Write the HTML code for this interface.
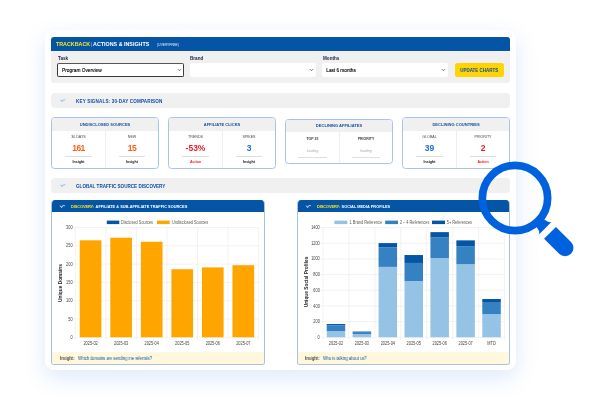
<!DOCTYPE html>
<html><head><meta charset="utf-8">
<style>
*{margin:0;padding:0;box-sizing:border-box}
html,body{width:600px;height:400px;overflow:hidden;background:#fff;font-family:"Liberation Sans",sans-serif}
.a{position:absolute;will-change:transform}
.outer{left:45px;top:30px;width:471px;height:339.5px;border-radius:9px;background:#fff;box-shadow:0 7px 22px rgba(45,120,232,.17)}
.hdr{left:51px;top:37px;width:459px;height:14px;background:#0455a5;border-radius:3px 3px 0 0}
.filt{left:51px;top:51px;width:459px;height:32px;background:#f0f0f0;border-radius:0 0 3px 3px}
.lbl{font-size:4.6px;font-weight:bold;color:#1b1f4a;line-height:5px}
.sel{top:63px;height:13.5px;background:#fff;border-radius:2px;font-size:4.5px;color:#000;-webkit-text-stroke:0.12px #000;line-height:14.5px;padding-left:4.5px}
.chev{position:absolute;right:2.5px;top:4.4px;width:2.3px;height:2.3px;border-right:0.55px solid #555;border-bottom:0.55px solid #555;transform:rotate(45deg)}
.bar{height:14.5px;background:#f0f0f0;border-radius:4px}
.bartxt{font-size:4.6px;font-weight:bold;color:#0f4ca6;line-height:5px}
.card{border:1px solid #a9c3e6;border-radius:3.5px;background:#fff;overflow:hidden}
.ch{height:13px;background:#f0f0f0;text-align:center;font-size:4.05px;font-weight:bold;color:#1a4fa0;line-height:13px}
.col{position:absolute;top:13px;bottom:0;width:50%;text-align:center}
.col.r{left:50%;border-left:1px solid #eee}
.col.l{left:0}
.k{position:absolute;left:0;right:0;top:4px;font-size:3.6px;color:#444;line-height:4px}
.v{position:absolute;left:0;right:0;top:12.5px;font-size:8.5px;font-weight:bold;line-height:9px}
.ln{position:absolute;left:13px;right:13px;top:25px;height:0.8px;background:#dedede}
.ins{position:absolute;left:0;right:0;top:29px;font-size:3.6px;font-weight:bold;color:#111;line-height:4px}
.panel{border:1px solid #a8c1e3;border-top:none;border-radius:4px 4px 3px 3px;background:#fff;overflow:hidden}
.ph{position:absolute;left:0;top:0;right:0;height:12px;background:#0455a5}
.phtxt{font-size:3.9px;font-weight:bold;color:#fff;line-height:5px;white-space:nowrap}
.yl{font-size:3.8px;color:#333;line-height:4px;text-align:right;width:20px}
.xl{font-size:3.8px;color:#333;line-height:4px;text-align:center;width:30px}
.ico{width:5px;height:3px}
.insight{position:absolute;left:0;right:0;bottom:0;height:12.5px;background:#fff8dc}
.instxt{font-size:4.45px;line-height:5px;white-space:nowrap;transform:scaleX(0.9);transform-origin:0 0}
</style></head><body>
<div class="a outer"></div>
<div class="a hdr"></div>
<div class="a" style="left:55.5px;top:40.6px;font-size:5.35px;font-weight:bold;line-height:6px;white-space:nowrap;color:#fff"><span style="color:#ffe61a">TRACKBACK</span><span style="color:#b9c4a0;font-weight:normal;margin-left:0.3px">|</span> ACTIONS &amp; INSIGHTS</div>
<div class="a" style="left:157.3px;top:42.6px;font-size:3.25px;line-height:4px;color:#eef3fb;white-space:nowrap;letter-spacing:-0.05px">(1/VERYFREE)</div>

<div class="a filt"></div>
<div class="a lbl" style="left:58px;top:55.5px">Task</div>
<div class="a lbl" style="left:190px;top:55.5px">Brand</div>
<div class="a lbl" style="left:322.5px;top:55.5px">Months</div>
<div class="a sel" style="left:57px;width:127px;border:1px solid #3a3a3a;border-top:1.5px solid #555;line-height:12px;padding-left:4px;font-size:4.8px"><span style="position:relative;top:1px">Program Overview</span><svg style="position:absolute;right:1.5px;top:4px" width="5" height="4" viewBox="0 0 5 4"><path d="M1,1.2 L2.5,2.7 L4,1.2" stroke="#333" stroke-width="0.7" fill="none"/></svg></div>
<div class="a sel" style="left:190px;width:126px"><svg style="position:absolute;right:2px;top:5px" width="5" height="4" viewBox="0 0 5 4"><path d="M1,1.2 L2.5,2.7 L4,1.2" stroke="#333" stroke-width="0.7" fill="none"/></svg></div>
<div class="a sel" style="left:322px;width:126px;font-size:4.7px;padding-left:4.3px"><span style="position:relative;top:1px">Last 6 months</span><svg style="position:absolute;right:2px;top:5px" width="5" height="4" viewBox="0 0 5 4"><path d="M1,1.2 L2.5,2.7 L4,1.2" stroke="#333" stroke-width="0.7" fill="none"/></svg></div>
<div class="a" style="left:454.5px;top:63px;width:48.5px;height:13.5px;background:#ffd400;border-radius:2.5px;font-size:4.5px;font-weight:bold;color:#1246aa;text-align:center;line-height:15.6px">UPDATE CHARTS</div>

<div class="a bar" style="left:51px;top:93px;width:458.5px"></div>
<svg class="a" style="left:59px;top:97.5px" width="8" height="5" viewBox="0 0 8 5"><path d="M1.5,1.8 L3,3.6 L4,1.8 M4.3,2.2 Q5.3,1.3 6.3,2" stroke="#6aa8ee" stroke-width="0.8" fill="none"/></svg>
<div class="a bartxt" style="left:76px;top:98.6px;letter-spacing:0.14px">KEY SIGNALS: 30-DAY COMPARISON</div>

<!-- cards -->
<div class="a card" style="left:51px;top:117px;width:108px;height:52px">
  <div class="ch">UNDISCLOSED SOURCES</div>
  <div class="col l"><div class="k">30 DAYS</div><div class="v" style="color:#f8601a;letter-spacing:-0.6px">161</div><div class="ln"></div><div class="ins">Insight</div></div>
  <div class="col r"><div class="k">NEW</div><div class="v" style="color:#f8601a;letter-spacing:-0.6px">15</div><div class="ln"></div><div class="ins">Insight</div></div>
</div>
<div class="a card" style="left:168px;top:117px;width:108px;height:52px">
  <div class="ch">AFFILIATE CLICKS</div>
  <div class="col l"><div class="k">TRENDS</div><div class="v" style="color:#ee1b24">-53%</div><div class="ln"></div><div class="ins" style="color:#ee1b24">Action</div></div>
  <div class="col r"><div class="k">SPIKES</div><div class="v" style="color:#1e6ae0">3</div><div class="ln"></div><div class="ins">Insight</div></div>
</div>
<div class="a card" style="left:285px;top:119px;width:108px;height:45.2px">
  <div class="ch" style="height:12px;line-height:12px">DECLINING AFFILIATES</div>
  <div class="col l" style="top:12px"><div class="k" style="top:5px;font-weight:bold;color:#3a3a3a;font-size:3.5px">TOP 25</div><div class="k" style="top:17px;font-style:italic;color:#aaa">loading</div><div class="ln" style="top:25px;left:12px;right:12px"></div></div>
  <div class="col r" style="top:12px"><div class="k" style="top:5px;font-weight:bold;color:#3a3a3a;font-size:3.5px">PRIORITY</div><div class="k" style="top:17px;font-style:italic;color:#aaa">loading</div><div class="ln" style="top:25px;left:12px;right:12px"></div></div>
</div>
<div class="a card" style="left:402px;top:117px;width:108px;height:52px">
  <div class="ch">DECLINING COUNTRIES</div>
  <div class="col l"><div class="k">GLOBAL</div><div class="v" style="color:#1e6ae0">39</div><div class="ln"></div><div class="ins">Insight</div></div>
  <div class="col r"><div class="k">PRIORITY</div><div class="v" style="color:#ee1b24">2</div><div class="ln"></div><div class="ins" style="color:#ee1b24">Action</div></div>
</div>

<div class="a bar" style="left:51px;top:178px;width:458.5px;height:15px"></div>
<svg class="a" style="left:59px;top:183px" width="8" height="5" viewBox="0 0 8 5"><path d="M1.5,1.8 L3,3.6 L4,1.8 M4.3,2.2 Q5.3,1.3 6.3,2" stroke="#6aa8ee" stroke-width="0.8" fill="none"/></svg>
<div class="a bartxt" style="left:76px;top:183.5px">GLOBAL TRAFFIC SOURCE DISCOVERY</div>

<!-- left panel -->
<div class="a panel" style="left:51px;top:200px;width:213.5px;height:165px">
  <div class="ph"></div>
  <div class="insight"></div>
</div>
<svg class="a" style="left:58.5px;top:203.5px" width="7" height="5" viewBox="0 0 7 5"><path d="M1.2,1.6 L2.6,3.6 L3.6,1.6 M3.8,2 Q4.8,1 5.8,1.8" stroke="#fff" stroke-width="0.9" fill="none" opacity="0.9"/></svg><div class="a phtxt" style="left:70.8px;top:203.6px"><span style="color:#ffe61a;letter-spacing:-0.08px;margin-right:1.6px">DISCOVERY:</span>AFFILIATE &amp; SUB-AFFILIATE TRAFFIC SOURCES</div>

<!-- right panel -->
<div class="a panel" style="left:297px;top:200px;width:212.5px;height:165px">
  <div class="ph"></div>
  <div class="insight"></div>
</div>
<svg class="a" style="left:304.5px;top:203.5px" width="7" height="5" viewBox="0 0 7 5"><path d="M1.2,1.6 L2.6,3.6 L3.6,1.6 M3.8,2 Q4.8,1 5.8,1.8" stroke="#fff" stroke-width="0.9" fill="none" opacity="0.9"/></svg><div class="a phtxt" style="left:317px;top:203.6px"><span style="color:#ffe61a;letter-spacing:-0.08px;margin-right:1.6px">DISCOVERY:</span>SOCIAL MEDIA PROFILES</div>

<div class="a instxt" style="left:59.7px;top:356px"><b style="color:#4a4a4a">Insight:</b></div>
<div class="a instxt" style="left:77.7px;top:356px;color:#1256aa">Which domains are sending me referrals?</div>
<div class="a instxt" style="left:305px;top:356px"><b style="color:#4a4a4a">Insight:</b></div>
<div class="a instxt" style="left:323px;top:356px;color:#1256aa">Who is talking about us?</div>
<svg class="a" style="left:0;top:0" width="600" height="400" viewBox="0 0 600 400">
<style>.tk{font-size:4.6px;fill:#444;font-family:"Liberation Sans",sans-serif}.lg{font-size:4.55px;fill:#585858;font-family:"Liberation Sans",sans-serif}.yt{font-size:4.8px;font-weight:bold;fill:#2a2a2a;font-family:"Liberation Sans",sans-serif}</style>
<line x1="72.80" y1="337.30" x2="258.60" y2="337.30" stroke="#e6e6e6" stroke-width="0.5"/>
<text transform="translate(72.60,338.90) scale(0.85,1)" text-anchor="end" class="tk">0</text>
<line x1="72.80" y1="319.00" x2="258.60" y2="319.00" stroke="#e6e6e6" stroke-width="0.5"/>
<text transform="translate(72.60,320.60) scale(0.85,1)" text-anchor="end" class="tk">50</text>
<line x1="72.80" y1="300.70" x2="258.60" y2="300.70" stroke="#e6e6e6" stroke-width="0.5"/>
<text transform="translate(72.60,302.30) scale(0.85,1)" text-anchor="end" class="tk">100</text>
<line x1="72.80" y1="282.40" x2="258.60" y2="282.40" stroke="#e6e6e6" stroke-width="0.5"/>
<text transform="translate(72.60,284.00) scale(0.85,1)" text-anchor="end" class="tk">150</text>
<line x1="72.80" y1="264.10" x2="258.60" y2="264.10" stroke="#e6e6e6" stroke-width="0.5"/>
<text transform="translate(72.60,265.70) scale(0.85,1)" text-anchor="end" class="tk">200</text>
<line x1="72.80" y1="245.80" x2="258.60" y2="245.80" stroke="#e6e6e6" stroke-width="0.5"/>
<text transform="translate(72.60,247.40) scale(0.85,1)" text-anchor="end" class="tk">250</text>
<line x1="72.80" y1="227.50" x2="258.60" y2="227.50" stroke="#e6e6e6" stroke-width="0.5"/>
<text transform="translate(72.60,229.10) scale(0.85,1)" text-anchor="end" class="tk">300</text>
<line x1="75.30" y1="227.50" x2="75.30" y2="339.80" stroke="#e6e6e6" stroke-width="0.5"/>
<line x1="105.85" y1="227.50" x2="105.85" y2="339.80" stroke="#e6e6e6" stroke-width="0.5"/>
<line x1="136.40" y1="227.50" x2="136.40" y2="339.80" stroke="#e6e6e6" stroke-width="0.5"/>
<line x1="166.95" y1="227.50" x2="166.95" y2="339.80" stroke="#e6e6e6" stroke-width="0.5"/>
<line x1="197.50" y1="227.50" x2="197.50" y2="339.80" stroke="#e6e6e6" stroke-width="0.5"/>
<line x1="228.05" y1="227.50" x2="228.05" y2="339.80" stroke="#e6e6e6" stroke-width="0.5"/>
<line x1="258.60" y1="227.50" x2="258.60" y2="339.80" stroke="#e6e6e6" stroke-width="0.5"/>
<rect x="79.73" y="240.31" width="21.70" height="96.99" fill="#ffa500"/>
<text transform="translate(90.58,345.20) scale(0.85,1)" text-anchor="middle" class="tk">2025-02</text>
<rect x="110.28" y="237.75" width="21.70" height="99.55" fill="#ffa500"/>
<text transform="translate(121.12,345.20) scale(0.85,1)" text-anchor="middle" class="tk">2025-03</text>
<rect x="140.83" y="241.77" width="21.70" height="95.53" fill="#ffa500"/>
<text transform="translate(151.68,345.20) scale(0.85,1)" text-anchor="middle" class="tk">2025-04</text>
<rect x="171.38" y="269.22" width="21.70" height="68.08" fill="#ffa500"/>
<text transform="translate(182.22,345.20) scale(0.85,1)" text-anchor="middle" class="tk">2025-05</text>
<rect x="201.92" y="267.39" width="21.70" height="69.91" fill="#ffa500"/>
<text transform="translate(212.77,345.20) scale(0.85,1)" text-anchor="middle" class="tk">2025-06</text>
<rect x="232.47" y="265.20" width="21.70" height="72.10" fill="#ffa500"/>
<text transform="translate(243.32,345.20) scale(0.85,1)" text-anchor="middle" class="tk">2025-07</text>
<text transform="translate(62,283) rotate(-90)" text-anchor="middle" class="yt">Unique Domains</text>
<rect x="106.8" y="220.6" width="12.5" height="3.5" fill="#0455a5"/>
<text transform="translate(121.00,224.10) scale(0.85,1)" text-anchor="start" class="lg">Disclosed Sources</text>
<rect x="157" y="220.6" width="12.7" height="3.5" fill="#ffa500"/>
<text transform="translate(171.90,224.10) scale(0.85,1)" text-anchor="start" class="lg">Undisclosed Sources</text>
<line x1="320.50" y1="337.30" x2="504.50" y2="337.30" stroke="#e6e6e6" stroke-width="0.5"/>
<text transform="translate(319.80,338.90) scale(0.85,1)" text-anchor="end" class="tk">0</text>
<line x1="320.50" y1="321.61" x2="504.50" y2="321.61" stroke="#e6e6e6" stroke-width="0.5"/>
<text transform="translate(319.80,323.21) scale(0.85,1)" text-anchor="end" class="tk">200</text>
<line x1="320.50" y1="305.93" x2="504.50" y2="305.93" stroke="#e6e6e6" stroke-width="0.5"/>
<text transform="translate(319.80,307.53) scale(0.85,1)" text-anchor="end" class="tk">400</text>
<line x1="320.50" y1="290.24" x2="504.50" y2="290.24" stroke="#e6e6e6" stroke-width="0.5"/>
<text transform="translate(319.80,291.84) scale(0.85,1)" text-anchor="end" class="tk">600</text>
<line x1="320.50" y1="274.56" x2="504.50" y2="274.56" stroke="#e6e6e6" stroke-width="0.5"/>
<text transform="translate(319.80,276.16) scale(0.85,1)" text-anchor="end" class="tk">800</text>
<line x1="320.50" y1="258.87" x2="504.50" y2="258.87" stroke="#e6e6e6" stroke-width="0.5"/>
<text transform="translate(319.80,260.47) scale(0.85,1)" text-anchor="end" class="tk">1000</text>
<line x1="320.50" y1="243.19" x2="504.50" y2="243.19" stroke="#e6e6e6" stroke-width="0.5"/>
<text transform="translate(319.80,244.79) scale(0.85,1)" text-anchor="end" class="tk">1200</text>
<line x1="320.50" y1="227.50" x2="504.50" y2="227.50" stroke="#e6e6e6" stroke-width="0.5"/>
<text transform="translate(319.80,229.10) scale(0.85,1)" text-anchor="end" class="tk">1400</text>
<line x1="323.00" y1="227.50" x2="323.00" y2="339.80" stroke="#e6e6e6" stroke-width="0.5"/>
<line x1="348.93" y1="227.50" x2="348.93" y2="339.80" stroke="#e6e6e6" stroke-width="0.5"/>
<line x1="374.86" y1="227.50" x2="374.86" y2="339.80" stroke="#e6e6e6" stroke-width="0.5"/>
<line x1="400.79" y1="227.50" x2="400.79" y2="339.80" stroke="#e6e6e6" stroke-width="0.5"/>
<line x1="426.71" y1="227.50" x2="426.71" y2="339.80" stroke="#e6e6e6" stroke-width="0.5"/>
<line x1="452.64" y1="227.50" x2="452.64" y2="339.80" stroke="#e6e6e6" stroke-width="0.5"/>
<line x1="478.57" y1="227.50" x2="478.57" y2="339.80" stroke="#e6e6e6" stroke-width="0.5"/>
<line x1="504.50" y1="227.50" x2="504.50" y2="339.80" stroke="#e6e6e6" stroke-width="0.5"/>
<rect x="326.71" y="331.03" width="18.50" height="6.27" fill="#94c3e5"/>
<rect x="326.71" y="325.38" width="18.50" height="5.65" fill="#3581c2"/>
<rect x="326.71" y="324.05" width="18.50" height="1.33" fill="#0455a5"/>
<text transform="translate(335.96,345.20) scale(0.85,1)" text-anchor="middle" class="tk">2025-02</text>
<rect x="352.64" y="334.01" width="18.50" height="3.29" fill="#94c3e5"/>
<rect x="352.64" y="332.59" width="18.50" height="1.41" fill="#3581c2"/>
<rect x="352.64" y="331.57" width="18.50" height="1.02" fill="#0455a5"/>
<text transform="translate(361.89,345.20) scale(0.85,1)" text-anchor="middle" class="tk">2025-03</text>
<rect x="378.57" y="266.87" width="18.50" height="70.43" fill="#94c3e5"/>
<rect x="378.57" y="247.26" width="18.50" height="19.61" fill="#3581c2"/>
<rect x="378.57" y="243.11" width="18.50" height="4.16" fill="#0455a5"/>
<text transform="translate(387.82,345.20) scale(0.85,1)" text-anchor="middle" class="tk">2025-04</text>
<rect x="404.50" y="280.99" width="18.50" height="56.31" fill="#94c3e5"/>
<rect x="404.50" y="262.95" width="18.50" height="18.04" fill="#3581c2"/>
<rect x="404.50" y="255.03" width="18.50" height="7.92" fill="#0455a5"/>
<text transform="translate(413.75,345.20) scale(0.85,1)" text-anchor="middle" class="tk">2025-05</text>
<rect x="430.43" y="258.09" width="18.50" height="79.21" fill="#94c3e5"/>
<rect x="430.43" y="237.23" width="18.50" height="20.86" fill="#3581c2"/>
<rect x="430.43" y="232.13" width="18.50" height="5.10" fill="#0455a5"/>
<text transform="translate(439.68,345.20) scale(0.85,1)" text-anchor="middle" class="tk">2025-06</text>
<rect x="456.36" y="264.20" width="18.50" height="73.10" fill="#94c3e5"/>
<rect x="456.36" y="246.17" width="18.50" height="18.04" fill="#3581c2"/>
<rect x="456.36" y="240.36" width="18.50" height="5.80" fill="#0455a5"/>
<text transform="translate(465.61,345.20) scale(0.85,1)" text-anchor="middle" class="tk">2025-07</text>
<rect x="482.29" y="314.01" width="18.50" height="23.29" fill="#94c3e5"/>
<rect x="482.29" y="302.01" width="18.50" height="12.00" fill="#3581c2"/>
<rect x="482.29" y="299.03" width="18.50" height="2.98" fill="#0455a5"/>
<text transform="translate(491.54,345.20) scale(0.85,1)" text-anchor="middle" class="tk">MTD</text>
<text transform="translate(307.8,282) rotate(-90)" text-anchor="middle" class="yt">Unique Social Profiles</text>
<rect x="334.4" y="220.6" width="12.85" height="3.5" fill="#94c3e5"/>
<text transform="translate(349.60,224.10) scale(0.85,1)" text-anchor="start" class="lg">1 Brand Reference</text>
<rect x="385.2" y="220.6" width="12.8" height="3.5" fill="#3581c2"/>
<text transform="translate(399.90,224.10) scale(0.85,1)" text-anchor="start" class="lg">2 – 4 References</text>
<rect x="432" y="220.6" width="13" height="3.5" fill="#0455a5"/>
<text transform="translate(446.75,224.10) scale(0.85,1)" text-anchor="start" class="lg">5+ References</text>
</svg>
<svg class="a" style="left:0;top:0" width="600" height="400" viewBox="0 0 600 400">
<g fill="#0061df">
<circle cx="515" cy="198" r="32.65" fill="none" stroke="#0061df" stroke-width="7.7"/>
<g transform="translate(550,232.85) rotate(45)">
<path d="M0,-8.4 H21.3 A8.4,8.4 0 0 1 21.3,8.4 H0 Z"/>
<path d="M-18,-5.5 L-13,-5.5 Q-8.5,-5.8 -6.6,-8.6 L-6.6,8.6 Q-8.5,5.8 -13,5.5 L-18,5.5 Z"/>
</g>
</g>
</svg>

</body></html>
